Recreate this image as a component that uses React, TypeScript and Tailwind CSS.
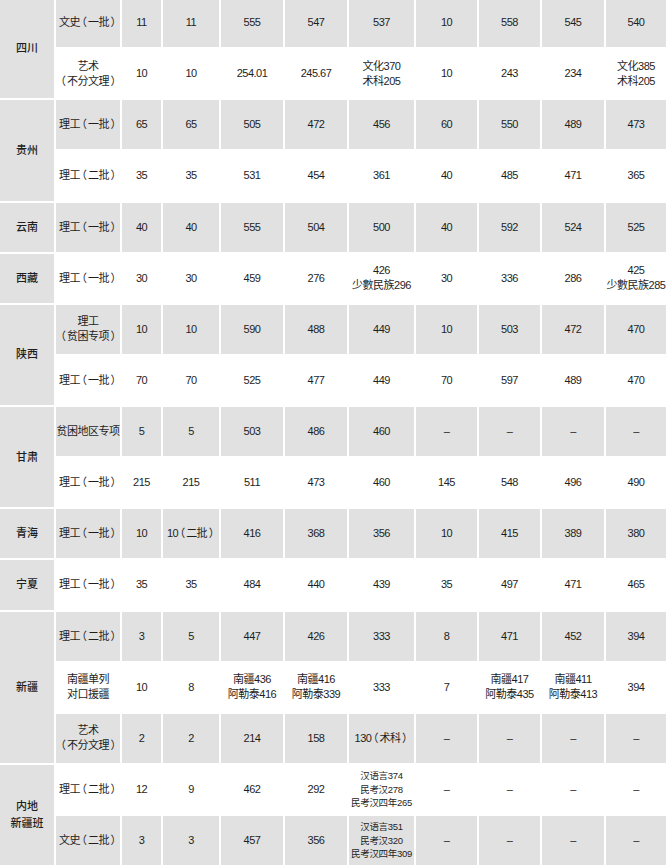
import { Fragment } from "react";

type Cell = string | string[];

type Row = {
    prov?: { name: string[]; span: 1 | 2 | 3 };
    label: string[];
    cells: Cell[];
};

const rows: Row[] = [
    { prov: { name: ["四川"], span: 2 }, label: ["文史（一批）"], cells: ["11", "11", "555", "547", "537", "10", "558", "545", "540"] },
    { label: ["艺术", "（不分文理）"], cells: ["10", "10", "254.01", "245.67", ["文化370", "术科205"], "10", "243", "234", ["文化385", "术科205"]] },
    { prov: { name: ["贵州"], span: 2 }, label: ["理工（一批）"], cells: ["65", "65", "505", "472", "456", "60", "550", "489", "473"] },
    { label: ["理工（二批）"], cells: ["35", "35", "531", "454", "361", "40", "485", "471", "365"] },
    { prov: { name: ["云南"], span: 1 }, label: ["理工（一批）"], cells: ["40", "40", "555", "504", "500", "40", "592", "524", "525"] },
    { prov: { name: ["西藏"], span: 1 }, label: ["理工（一批）"], cells: ["30", "30", "459", "276", ["426", "少數民族296"], "30", "336", "286", ["425", "少數民族285"]] },
    { prov: { name: ["陕西"], span: 2 }, label: ["理工", "（贫困专项）"], cells: ["10", "10", "590", "488", "449", "10", "503", "472", "470"] },
    { label: ["理工（一批）"], cells: ["70", "70", "525", "477", "449", "70", "597", "489", "470"] },
    { prov: { name: ["甘肃"], span: 2 }, label: ["贫困地区专项"], cells: ["5", "5", "503", "486", "460", "–", "–", "–", "–"] },
    { label: ["理工（一批）"], cells: ["215", "215", "511", "473", "460", "145", "548", "496", "490"] },
    { prov: { name: ["青海"], span: 1 }, label: ["理工（一批）"], cells: ["10", "10（二批）", "416", "368", "356", "10", "415", "389", "380"] },
    { prov: { name: ["宁夏"], span: 1 }, label: ["理工（一批）"], cells: ["35", "35", "484", "440", "439", "35", "497", "471", "465"] },
    { prov: { name: ["新疆"], span: 3 }, label: ["理工（二批）"], cells: ["3", "5", "447", "426", "333", "8", "471", "452", "394"] },
    { label: ["南疆单列", "对口援疆"], cells: ["10", "8", ["南疆436", "阿勒泰416"], ["南疆416", "阿勒泰339"], "333", "7", ["南疆417", "阿勒泰435"], ["南疆411", "阿勒泰413"], "394"] },
    { label: ["艺术", "（不分文理）"], cells: ["2", "2", "214", "158", "130（术科）", "–", "–", "–", "–"] },
    { prov: { name: ["内地", "新疆班"], span: 2 }, label: ["理工（二批）"], cells: ["12", "9", "462", "292", ["汉语言374", "民考汉278", "民考汉四年265"], "–", "–", "–", "–"] },
    { label: ["文史（二批）"], cells: ["3", "3", "457", "356", ["汉语言351", "民考汉320", "民考汉四年309"], "–", "–", "–", "–"] },
];

const spanClass = { 1: "row-span-1", 2: "row-span-2", 3: "row-span-3" };

// full-width brackets get a little air on both sides, like the source
function Text({ s }: { s: string }) {
    const parts = s.split(/([（）])/).filter(Boolean);
    return (
        <>
            {parts.map((p, i) =>
                p === "（" || p === "）" ? (
                    <span key={i} className="mx-[1.5px]">
                        {p}
                    </span>
                ) : (
                    <Fragment key={i}>{p}</Fragment>
                )
            )}
        </>
    );
}

function Lines({ lines }: { lines: string[] }) {
    return (
        <>
            {lines.map((l, i) => (
                <div key={i}>
                    <Text s={l} />
                </div>
            ))}
        </>
    );
}

export default function App() {
    return (
        <div className="w-[666px] h-[867px] overflow-hidden bg-white text-[#1e1e1e] font-['Liberation_Sans','Noto_Sans_CJK_SC',sans-serif]">
            <div className="-mt-[2px] grid grid-cols-[54px_64px_39px_56px_62px_62px_65px_61px_61px_62px_1fr] auto-rows-[49.14px] gap-[2px]">
                {rows.map((r, i) => {
                    const bg = i % 2 === 0 ? "bg-[#e1e1e1]" : "bg-white";
                    return (
                        <Fragment key={i}>
                            {r.prov && (
                                <div
                                    className={`${spanClass[r.prov.span]} bg-[#e1e1e1] flex flex-col items-center justify-center text-center text-[11px] leading-[17px] font-medium`}
                                >
                                    <Lines lines={r.prov.name} />
                                </div>
                            )}
                            <div
                                className={`${bg} flex flex-col items-center justify-center text-center text-[11px] leading-[15px] tracking-[-0.5px] whitespace-nowrap [font-feature-settings:'halt']`}
                            >
                                <Lines lines={r.label} />
                            </div>
                            {r.cells.map((c, j) => {
                                const lines = Array.isArray(c) ? c : [c];
                                const small = lines.length > 2;
                                return (
                                    <div
                                        key={j}
                                        className={`${bg} flex flex-col items-center justify-center text-center whitespace-nowrap [font-feature-settings:'halt'] ${
                                            small
                                                ? "text-[9.5px] leading-[13.7px] tracking-[-0.3px]"
                                                : "text-[11px] leading-[15px] tracking-[-0.5px]"
                                        }`}
                                    >
                                        <Lines lines={lines} />
                                    </div>
                                );
                            })}
                        </Fragment>
                    );
                })}
            </div>
        </div>
    );
}
